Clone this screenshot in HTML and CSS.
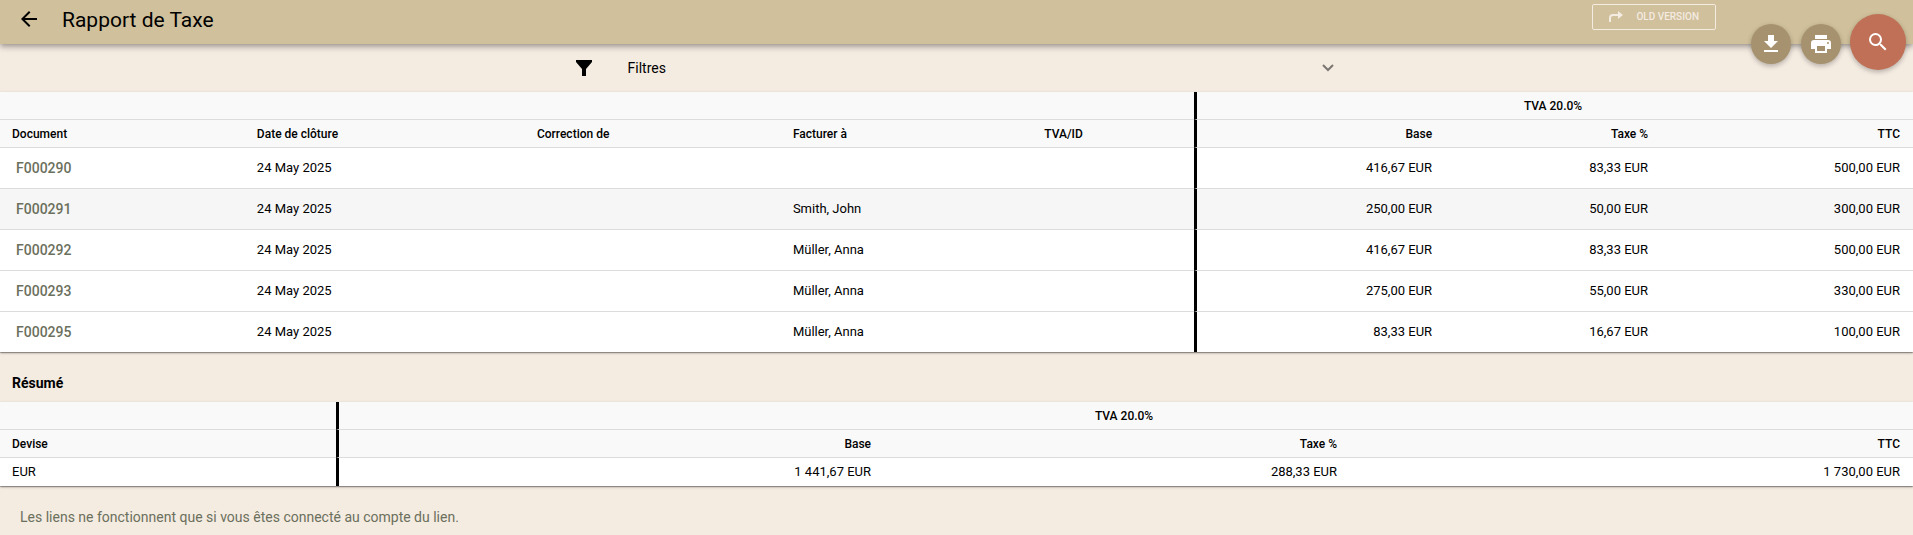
FILE: index.html
```html
<!DOCTYPE html>
<html lang="fr">
<head>
<meta charset="utf-8">
<meta name="viewport" content="width=device-width, initial-scale=1">
<title>Rapport de Taxe</title>
<link rel="stylesheet" href="styles.css">
</head>
<body>
<header class="toolbar">
  <button class="icon-button" type="button" aria-label="Retour">
    <svg class="icon" viewBox="0 0 24 24"><path d="M20 11H7.83l5.59-5.59L12 4l-8 8 8 8 1.41-1.41L7.83 13H20v-2z"/></svg>
  </button>
  <h1 class="title">Rapport de Taxe</h1>
  <button class="old-version" type="button">
    <svg class="old-version-icon" viewBox="0 0 14 12"><path d="M1 11V7q0-3 3-3h7" fill="none" stroke="currentColor" stroke-width="2"/><path d="M9 0l5 4-5 4z"/></svg>
    OLD VERSION
  </button>
  <div class="actions">
    <div class="actions-small">
      <button class="fab" type="button" aria-label="Télécharger">
        <svg class="icon" viewBox="0 0 24 24"><path d="M5 20h14v-2H5m14-9h-4V3H9v6H5l7 7 7-7z"/></svg>
      </button>
      <button class="fab" type="button" aria-label="Imprimer">
        <svg class="icon" viewBox="0 0 24 24"><path d="M18 3H6v4h12M19 12a1 1 0 0 1-1-1 1 1 0 0 1 1-1 1 1 0 0 1 1 1 1 1 0 0 1-1 1m-3 7H8v-5h8m3-6H5a3 3 0 0 0-3 3v6h4v4h12v-4h4v-6a3 3 0 0 0-3-3z"/></svg>
      </button>
    </div>
    <button class="fab fab-large" type="button" aria-label="Rechercher">
      <svg class="icon" viewBox="0 0 24 24"><path d="M15.5 14h-.79l-.28-.27A6.47 6.47 0 0 0 16 9.5 6.5 6.5 0 1 0 9.5 16c1.61 0 3.09-.59 4.23-1.57l.27.28v.79l5 4.99L20.49 19l-4.99-5zm-6 0C7.01 14 5 11.99 5 9.500S7.010 5 9.500 5 14 7.010 14 9.500 11.990 14 9.500 14z"/></svg>
    </button>
  </div>
</header>
<main>
  <button class="filters" type="button" aria-expanded="false">
    <svg class="icon" viewBox="0 0 24 24"><path d="M4 4h16v2l-6 7v7h-4v-7L4 6z"/></svg>
    <span class="filters-label">Filtres</span>
    <svg class="chevron" viewBox="0 0 12 8"><path d="M1 1l5 5 5-5" fill="none" stroke="currentColor" stroke-width="2"/></svg>
  </button>

  <table class="report documents">
    <colgroup>
      <col class="col-document"><col class="col-date"><col class="col-correction"><col class="col-client"><col class="col-vat"><col class="col-base"><col class="col-tax"><col class="col-total">
    </colgroup>
    <thead>
      <tr><td colspan="5"></td><th class="group split" colspan="3">TVA 20.0%</th></tr>
      <tr><th>Document</th><th>Date de clôture</th><th>Correction de</th><th>Facturer à</th><th>TVA/ID</th><th class="num split">Base</th><th class="num">Taxe %</th><th class="num">TTC</th></tr>
    </thead>
    <tbody>
      <tr><td><a class="link" href="#F000290">F000290</a></td><td>24 May 2025</td><td></td><td></td><td></td><td class="num split">416,67 EUR</td><td class="num">83,33 EUR</td><td class="num">500,00 EUR</td></tr>
      <tr class="highlight"><td><a class="link" href="#F000291">F000291</a></td><td>24 May 2025</td><td></td><td>Smith, John</td><td></td><td class="num split">250,00 EUR</td><td class="num">50,00 EUR</td><td class="num">300,00 EUR</td></tr>
      <tr><td><a class="link" href="#F000292">F000292</a></td><td>24 May 2025</td><td></td><td>Müller, Anna</td><td></td><td class="num split">416,67 EUR</td><td class="num">83,33 EUR</td><td class="num">500,00 EUR</td></tr>
      <tr><td><a class="link" href="#F000293">F000293</a></td><td>24 May 2025</td><td></td><td>Müller, Anna</td><td></td><td class="num split">275,00 EUR</td><td class="num">55,00 EUR</td><td class="num">330,00 EUR</td></tr>
      <tr><td><a class="link" href="#F000295">F000295</a></td><td>24 May 2025</td><td></td><td>Müller, Anna</td><td></td><td class="num split">83,33 EUR</td><td class="num">16,67 EUR</td><td class="num">100,00 EUR</td></tr>
    </tbody>
  </table>

  <h2 class="section-title">Résumé</h2>
  <table class="report summary">
    <colgroup>
      <col class="sum-currency"><col class="sum-base"><col class="sum-tax"><col class="sum-total">
    </colgroup>
    <thead>
      <tr><td></td><th class="group split" colspan="3">TVA 20.0%</th></tr>
      <tr><th>Devise</th><th class="num split">Base</th><th class="num">Taxe %</th><th class="num">TTC</th></tr>
    </thead>
    <tbody>
      <tr><td>EUR</td><td class="num split">1 441,67 EUR</td><td class="num">288,33 EUR</td><td class="num">1 730,00 EUR</td></tr>
    </tbody>
  </table>
  <p class="note">Les liens ne fonctionnent que si vous êtes connecté au compte du lien.</p>
</main>
</body>
</html>
```
FILE: styles.css
```css
* {
  box-sizing: border-box;
}

body {
  margin: 0;
  background: #f4ebe1;
  color: #000;
  font-family: Roboto, sans-serif;
  font-size: 14px;
  line-height: 20px;
}

button {
  padding: 0;
  border: 0;
  background: none;
  color: inherit;
  font: inherit;
  cursor: pointer;
}

.icon {
  display: block;
  width: 24px;
  height: 24px;
  fill: currentColor;
}

.toolbar {
  position: relative;
  display: flex;
  align-items: flex-start;
  height: 44px;
  padding: 0 197px 0 17px;
  background: #d0c09b;
  box-shadow: 0 2px 4px -1px rgba(0, 0, 0, .2), 0 4px 5px 0 rgba(0, 0, 0, .14), 0 1px 10px 0 rgba(0, 0, 0, .12);
}

.icon-button {
  margin-top: 7px;
}

.title {
  flex: 1;
  margin: 0 0 0 21px;
  font-size: 21px;
  font-weight: 400;
  line-height: 40px;
}

.old-version {
  display: flex;
  align-items: center;
  gap: 13px;
  height: 26px;
  margin-top: 4px;
  padding: 0 16px;
  border: 1px solid #f4ebe1;
  border-radius: 2px;
  color: #f4ebe1;
  font-size: 10px;
  font-weight: 500;
}

.old-version-icon {
  width: 14px;
  height: 12px;
  fill: currentColor;
}

.actions {
  position: absolute;
  top: 14px;
  right: 7px;
  display: flex;
  gap: 9px;
}

.actions-small {
  display: flex;
  gap: 10px;
  padding-top: 10px;
}

.fab {
  display: grid;
  place-items: center;
  width: 40px;
  height: 40px;
  border-radius: 50%;
  background: #a79270;
  color: #fff;
  box-shadow: 0 2px 5px 0 rgba(0, 0, 0, .26);
}

.fab-large {
  width: 56px;
  height: 56px;
  background: #bf7056;
}

.filters {
  display: flex;
  align-items: center;
  width: 100%;
  max-width: 802px;
  height: 48px;
  margin: 0 auto;
  padding: 0 24px 0 16px;
  text-align: left;
}

.filters-label {
  flex: 1;
  margin-left: 32px;
}

.chevron {
  width: 12px;
  height: 8px;
  color: #7b7672;
}

.report {
  width: 100%;
  table-layout: fixed;
  border-collapse: separate;
  border-spacing: 0;
  background: #fff;
  font-size: 13px;
  box-shadow: 0 1px 3px 0 rgba(0, 0, 0, .2), 0 1px 1px 0 rgba(0, 0, 0, .24), 0 2px 1px -1px rgba(0, 0, 0, .12);
}

.report th,
.report td {
  height: 28px;
  padding: 0 12px;
  border-bottom: 1px solid #dcdcdc;
  text-align: left;
  white-space: nowrap;
}

.report thead {
  background: #f9f9f9;
}

.report th {
  font-size: 12px;
  font-weight: 500;
}

.report tbody tr:last-child td {
  border-bottom: 0;
}

.documents tbody td {
  height: 41px;
}

.documents tbody tr:last-child td {
  height: 40px;
}

.report .num {
  text-align: right;
}

.report .num:last-child {
  padding-right: 13px;
}

.report .group {
  padding-left: 8px;
  text-align: center;
}

.report .split {
  border-left: 3px solid #000;
}

.highlight {
  background: #f6f6f6;
}

.link {
  padding: 0 4px;
  color: #6b705c;
  font-size: 14px;
  font-weight: 500;
  text-decoration: none;
}

.col-document { width: 12.8%; }
.col-date { width: 14.64%; }
.col-correction { width: 13.38%; }
.col-client { width: 13.14%; }
.col-vat { width: 8.46%; }
.col-base { width: 13.07%; }
.col-tax { width: 11.29%; }
.col-total { width: 13.22%; }

.sum-currency { width: 17.57%; }
.sum-base { width: 28.59%; }
.sum-tax { width: 24.36%; }
.sum-total { width: 29.48%; }

.section-title {
  margin: 0;
  padding: 21px 12px 9px;
  font-size: 14px;
  font-weight: 700;
}

.note {
  margin: 0;
  padding: 21px 20px 8px;
  color: #6b705c;
}
```
